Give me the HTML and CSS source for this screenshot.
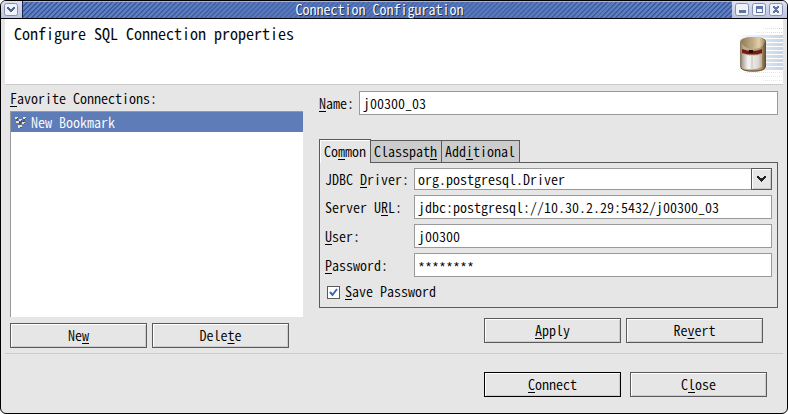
FILE: index.html
```html
<!DOCTYPE html>
<html>

<head>
    <meta charset="utf-8" />
    <title>Connection Configuration</title>
    <link rel="stylesheet" href="styles.css">
</head>

<body>
    <div class="window">
        <div class="titlebar">
            <div class="menu">
                <svg width="14" height="13" viewBox="0 0 14 13"><rect x=".5" y=".5" width="13" height="12" rx="2" fill="#f0f2fa" stroke="#8590ae"/><path d="M3 4h2v1h1v1h2V5h1V4h2v2h-1v1H9v1H8v1H6V8H5V7H4V6H3z" fill="#506794"/></svg>
            </div>
            <div class="title">Connection Configuration</div>
            <div class="controls">
                <svg width="14" height="13" viewBox="0 0 14 13"><rect x=".5" y=".5" width="13" height="12" rx="2" fill="#f0f2fa" stroke="#8590ae"/><path d="M4 7h7v3H4z" fill="#5f76a4"/></svg>
                <svg width="14" height="13" viewBox="0 0 14 13"><rect x=".5" y=".5" width="13" height="12" rx="2" fill="#f0f2fa" stroke="#8590ae"/><path d="M4 3h7v7H4zM5 6v3h5V6z" fill="#5f76a4" fill-rule="evenodd"/></svg>
                <svg width="14" height="13" viewBox="0 0 14 13"><rect x=".5" y=".5" width="13" height="12" rx="2" fill="#f0f2fa" stroke="#8590ae"/><path d="M4 3h2v1h2V3h2v2H9v1H8v1h1v1h1v2H8V9H6v1H4V8h1V7h1V6H5V5H4z" fill="#5f76a4"/></svg>
            </div>
        </div>
        <div class="banner">
            <h1>Configure SQL Connection properties</h1>
            <svg class="logo" width="60" height="65" viewBox="0 0 60 65">
                <defs>
                    <linearGradient id="fade" gradientUnits="userSpaceOnUse" x1="12" y1="0" x2="60" y2="0"><stop offset="0" stop-color="#c6d4e6" stop-opacity="0"/><stop offset="1" stop-color="#c6d4e6"/></linearGradient>
                    <linearGradient id="brass"><stop offset="0" stop-color="#8a7658"/><stop offset=".15" stop-color="#c4b38e"/><stop offset=".8" stop-color="#b39b70"/><stop offset="1" stop-color="#5f482a"/></linearGradient>
                    <linearGradient id="lid"><stop offset="0" stop-color="#8f7a58"/><stop offset=".5" stop-color="#c2ae86"/><stop offset=".75" stop-color="#e0d2ae"/><stop offset="1" stop-color="#9c8258"/></linearGradient>
                    <linearGradient id="paper"><stop offset="0" stop-color="#a8a29a"/><stop offset=".3" stop-color="#f4f3f1"/><stop offset=".8" stop-color="#dedad4"/><stop offset="1" stop-color="#b5ada0"/></linearGradient>
                </defs>
                <!-- striped backdrop -->
                <path d="M40 9.500h20M32 13.500h28" stroke="url(#fade)" stroke-width="1" stroke-dasharray="1 1"/>
                <path d="M12 16h48v3H12zM12 20h48v3H12zM12 24h48v3H12zM12 28h48v3H12zM12 32h48v3H12zM12 36h48v3H12zM12 40h48v3H12zM12 44h48v3H12zM12 48h48v3H12z" fill="url(#fade)"/>
                <path d="M22 53.500h38M28 57.500h32M40 61.500h20" stroke="#dfe7f1" stroke-width="1" stroke-dasharray="1 1"/>
                <!-- jar -->
                <path d="M17 23q0-5 13-5t13 5v25q-2 5-13 5t-13-5z" fill="url(#brass)"/>
                <path d="M18 22q2-4 12-4t12 4q-1 7-12 8-11-1-12-8z" fill="url(#lid)"/>
                <path d="M19 30q11 4 20 0v4q-9 3-20 0z" fill="#751a1a"/>
                <path d="M26 31h4v3h-4z" fill="#2b0c0c"/>
                <path d="M19 35q11 3 20 0v13q-9 4-20 1z" fill="url(#paper)"/>
                <path d="M29 37v13" stroke="#c4beb6" fill="none"/>
                <path d="M18 49q2 3 12 3t12-3" stroke="#6b5434" fill="none"/>
            </svg>
        </div>
        <div class="content">
            <div class="favorites">
                <label><u>F</u>avorite Connections:</label>
                <div class="list">
                    <div class="item selected">
                        <svg width="12" height="13" viewBox="0 0 12 13"><path d="M2 3v3h3v4M5 6h4V3" stroke="#3b3b3b" fill="none"/><path d="M0 1h3v2H0zM1 5h3v2H1zM4 3h3v2H4zM8 1h3v2H8zM7 6h3v2H7zM3 9h4v3H3z" fill="#e6e2cc"/><path d="M2 2h1v1H2zM6 4h1v1H6zM10 2h1v1h-1zM9 7h1v1H9zM5 11h2v1H5z" fill="#555"/></svg>
                        <span>New Bookmark</span>
                    </div>
                </div>
                <div class="buttons">
                    <button>Ne<u>w</u></button>
                    <button>Dele<u>t</u>e</button>
                </div>
            </div>
            <div class="details">
                <div class="name-row">
                    <label for="name"><u>N</u>ame:</label>
                    <input type="text" id="name" value="j00300_03">
                </div>
                <div class="tabs">
                    <div class="tab active">Co<u>m</u>mon</div>
                    <div class="tab">Classpat<u>h</u></div>
                    <div class="tab">Add<u>i</u>tional</div>
                </div>
                <div class="panel">
                    <label for="driver">JDBC <u>D</u>river:</label>
                    <div class="combo">
                        <input type="text" id="driver" value="org.postgresql.Driver">
                        <div class="arrow"><svg width="9" height="6" viewBox="0 0 9 6"><path d="M0 0h2v1h1v1h3V1h1V0h2v2H8v1H7v1H6v1H5v1H4V5H3V4H2V3H1V2H0z" fill="#222"/></svg></div>
                    </div>
                    <label for="url">Server U<u>R</u>L:</label>
                    <input type="text" id="url" value="jdbc:postgresql://10.30.2.29:5432/j00300_03">
                    <label for="user"><u>U</u>ser:</label>
                    <input type="text" id="user" value="j00300">
                    <label for="password"><u>P</u>assword:</label>
                    <input type="text" id="password" class="stars" value="********">
                    <div class="save">
                        <span class="check"><svg width="9" height="9" viewBox="0 0 9 9"><path d="M1 4l2.500 3L8 1" stroke="#3f66b5" stroke-width="2" fill="none"/></svg></span>
                        <label><u>S</u>ave Password</label>
                    </div>
                </div>
                <div class="buttons">
                    <button><u>A</u>pply</button>
                    <button>Re<u>v</u>ert</button>
                </div>
            </div>
        </div>
        <div class="footer">
            <button class="default"><u>C</u>onnect</button>
            <button>C<u>l</u>ose</button>
        </div>
    </div>
</body>

</html>
```

FILE: styles.css
```css
* {
    box-sizing: border-box;
}

body {
    margin: 0;
    background: #fff;
    overflow: hidden;
}

/* half-width latin glyphs, every letter is 0.5em wide */
body,
input,
button {
    font: 350 14px/16px "Noto Sans CJK JP", monospace;
    font-feature-settings: "hwid";
    font-variant-ligatures: none;
    color: #000;
}

.window {
    display: flex;
    flex-direction: column;
    width: 788px;
    height: 414px;
    background: #e6e6e6;
    border: 1px solid #000;
    border-radius: 6px;
    overflow: hidden;
}

u {
    text-underline-offset: 2px;
    text-decoration-thickness: 1px;
    text-decoration-skip-ink: none;
}

/* title bar */
.titlebar {
    display: flex;
    height: 18px;
    border-bottom: 1px solid #000;
}

.title {
    flex: 1;
    padding-left: 4px;
    color: #fff;
    text-align: center;
    text-shadow: 1px 1px 0 #203050;
    border-left: 1px solid #1c2a50;
    background:
        linear-gradient(#a3b2e2 0 1px, transparent 1px),
        linear-gradient(90deg, transparent 10%, rgba(80, 112, 182, .6) 40% 60%, transparent 90%),
        repeating-linear-gradient(135deg, #3a5aa2 0 1.4px, #5f7fbe 1.4px 3.5px);
}

.menu,
.controls {
    display: flex;
    align-items: center;
    background: linear-gradient(#dde0ee, #b9c2e0);
}

.menu {
    width: 21px;
    padding-left: 3px;
}

.controls {
    width: 55px;
    padding-left: 3px;
    gap: 3px;
}

/* banner */
.banner {
    display: flex;
    justify-content: space-between;
    height: 66px;
    margin: 0 4px;
    padding-left: 9px;
    background: #fff;
    border-bottom: 1px solid #ccc;
}

h1 {
    margin: 4px 0 0;
    font-size: 16px;
    line-height: 20px;
    font-weight: 350;
    -webkit-text-stroke: .1px;
}

/* body */
.content {
    display: flex;
    gap: 16px;
    height: 269px;
    margin: 0 4px;
    padding: 6px 5px 0;
    border-bottom: 1px solid #ccc;
}

.favorites {
    width: 293px;
}

.favorites label {
    display: block;
    height: 21px;
    margin-top: -1px;
}

.list {
    height: 206px;
    background: #fff;
    border: 1px solid #999;
    border-right: 0;
    border-bottom: 0;
}

.item {
    display: flex;
    align-items: center;
    gap: 4px;
    height: 20px;
    padding-left: 4px;
}

.selected {
    background: #5e7cb8;
    color: #fff;
}

.buttons {
    display: flex;
    gap: 5px;
}

button {
    width: 137px;
    height: 25px;
    padding: 0 0 2px;
    background: #e6e6e6;
    border: 1px solid #5a5a5a;
    box-shadow: inset 1px 1px #fff, inset -1px -1px #ccc;
}

button.default {
    border-color: #000;
}

.favorites .buttons {
    margin-top: 6px;
}

.details {
    width: 459px;
}

input {
    width: 100%;
    height: 24px;
    padding: 0 3px 1px;
    background: #fff;
    border: 1px solid #999;
    border-radius: 0;
    outline: 0;
}

.stars {
    padding-top: 5px;
}

.name-row {
    display: flex;
    align-items: center;
}

.name-row label {
    flex: 0 0 40px;
    padding-bottom: 1px;
}

.tabs {
    display: flex;
    align-items: flex-end;
    height: 24px;
    margin-top: 24px;
}

.tab {
    height: 23px;
    padding: 2px 4px 1px 3px;
    background: #ccc;
    border: 1px solid #5a5a5a;
    border-left: 0;
}

/* hides the panel border below the open tab */
.tab.active {
    z-index: 1;
    width: 52px;
    height: 24px;
    padding: 3px 4px;
    background: #e6e6e6;
    border-left: 1px solid #5a5a5a;
    border-bottom: 0;
    box-shadow: inset 1px 1px #fff;
}

.panel {
    display: grid;
    grid-template-columns: 89px 1fr;
    grid-template-rows: 22px 24px 24px 24px 21px;
    align-items: center;
    row-gap: 5px;
    height: 146px;
    margin-top: -1px;
    padding: 5px;
    border: 1px solid #5a5a5a;
}

.panel label {
    padding-bottom: 1px;
}

.combo {
    display: flex;
}

.combo input {
    flex: 1;
    width: auto;
    height: 22px;
    border-right: 0;
}

.arrow {
    display: flex;
    align-items: center;
    justify-content: center;
    width: 21px;
    height: 22px;
    border: 1px solid #5a5a5a;
    box-shadow: inset 1px 1px #fff, inset -1px -1px #ccc;
}

.save {
    grid-column: 1 / 3;
    display: flex;
    align-items: center;
    gap: 5px;
    padding-left: 2px;
}

.save label {
    padding-bottom: 3px;
}

.check {
    display: flex;
    align-items: center;
    justify-content: center;
    width: 13px;
    height: 13px;
    background: #fff;
    border: 1px solid #5a5a5a;
}

.details .buttons {
    justify-content: flex-end;
    margin: 10px 15px 0 0;
}

.footer {
    display: flex;
    gap: 9px;
    justify-content: flex-end;
    padding: 18px 20px 0 0;
}
```
